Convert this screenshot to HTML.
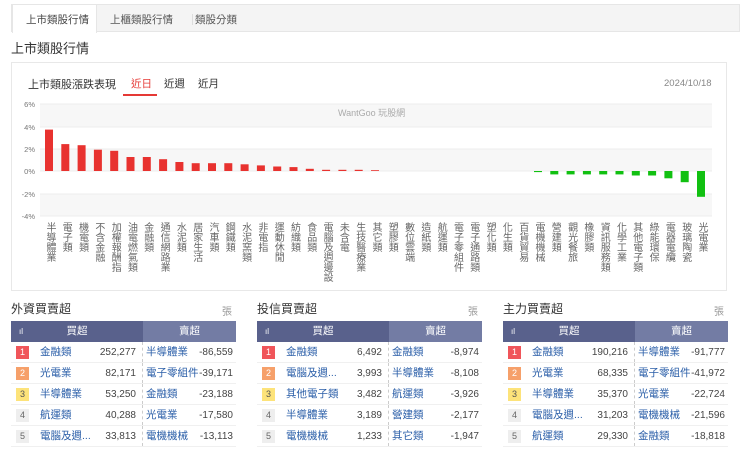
<!DOCTYPE html>
<html><head><meta charset="utf-8"><style>
*{margin:0;padding:0;box-sizing:border-box}
body{width:740px;height:451px;background:#fff;font-family:"Liberation Sans","Noto Sans CJK TC",sans-serif;color:#333;position:relative;overflow:hidden}
.abs{position:absolute}
.tabs{left:11px;top:4px;width:729px;height:28px;background:#f4f4f4;border:1px solid #e6e6e6;border-bottom:1px solid #e6e6e6}
.tab{position:absolute;top:7px;font-size:10.5px;color:#444}
.act{position:absolute;left:0;top:-1px;width:85px;height:29px;background:#fff;border:1px solid #e6e6e6;border-bottom:none}
.box{left:11px;top:62px;width:716px;height:229px;border:1px solid #e8e8e8}
.lbl{position:absolute;top:222px;width:12px;font-size:10px;line-height:11.3px;color:#666;writing-mode:vertical-rl;text-orientation:upright}
.panel{position:absolute;top:300px;width:225px}
.ptitle{font-size:12px;color:#333;height:21px;font-weight:normal}
.zh{position:absolute;right:4px;top:3px;font-size:10px;color:#999}
.hd{height:21px;display:flex;font-size:10.5px;color:#fff;line-height:21px}
.hd .l{width:132px;background:#59618c;position:relative;text-align:center}
.hd .r{flex:1;background:#737ca4;text-align:center}
.row{height:21px;display:flex;font-size:10.5px;line-height:21px;border-bottom:1px solid #f0f0f0}
.row .l{width:132px;position:relative;border-right:1px dashed #ccc}
.row .r{flex:1;position:relative}
.bd{position:absolute;left:5px;top:4px;width:13px;height:13px;font-size:9px;line-height:13px;text-align:center;color:#fff}
.nm{position:absolute;left:29px;color:#2a5ea8}
.nv{position:absolute;right:6px;color:#444;font-size:10px}
.r .nv{right:3px}
.rn{position:absolute;left:3px;color:#2a5ea8}
</style></head><body>
<div class="abs tabs">
<div class="act"></div>
<div class="tab" style="left:14px">上市類股行情</div>
<div class="tab" style="left:98px;color:#555">上櫃類股行情</div>
<div class="abs" style="left:180px;top:9px;width:1px;height:11px;background:#ddd"></div>
<div class="tab" style="left:183px;color:#555">類股分類</div>
</div>
<div class="abs" style="left:11px;top:38px;font-size:13px;color:#333">上市類股行情</div>
<div class="abs box"></div>
<div class="abs" style="left:28px;top:76px;font-size:11px;color:#333">上市類股漲跌表現</div>
<div class="abs" style="left:131px;top:76px;font-size:10.5px;color:#e53935">近日</div>
<div class="abs" style="left:123px;top:94px;width:34px;height:2px;background:#e53935"></div>
<div class="abs" style="left:164px;top:76px;font-size:10.5px;color:#333">近週</div>
<div class="abs" style="left:198px;top:76px;font-size:10.5px;color:#333">近月</div>
<div class="abs" style="left:664px;top:78px;font-size:9.5px;color:#888">2024/10/18</div>
<svg class="abs" style="left:0;top:0" width="740" height="230">
<rect x="40" y="104" width="672" height="23" fill="#f7f7f7"/>
<rect x="40" y="149" width="672" height="22" fill="#f7f7f7"/>
<rect x="40" y="194" width="672" height="22" fill="#f7f7f7"/>
<g stroke="#ececec" stroke-width="1">
<line x1="40" y1="104" x2="712" y2="104"/><line x1="40" y1="127" x2="712" y2="127"/><line x1="40" y1="149" x2="712" y2="149"/><line x1="40" y1="171" x2="712" y2="171"/><line x1="40" y1="194" x2="712" y2="194"/><line x1="40" y1="216" x2="712" y2="216"/>
</g>
<g font-size="7.5" fill="#777" font-family="Liberation Sans" text-anchor="end">
<text x="35" y="107">6%</text><text x="35" y="130">4%</text><text x="35" y="152">2%</text><text x="35" y="174">0%</text><text x="35" y="197">-2%</text><text x="35" y="219">-4%</text>
</g>
<text x="338" y="116" font-size="9" fill="#aaa">WantGoo 玩股網</text>
<g fill="#e8322f">
<rect x="45" y="129.6" width="8" height="41.4"/><rect x="61.3" y="144.1" width="8" height="26.9"/><rect x="77.6" y="145.2" width="8" height="25.8"/><rect x="93.9" y="149.7" width="8" height="21.3"/><rect x="110.2" y="150.8" width="8" height="20.2"/><rect x="126.5" y="157" width="8" height="14"/><rect x="142.8" y="157" width="8" height="14"/><rect x="159.1" y="159.2" width="8" height="11.8"/><rect x="175.4" y="162" width="8" height="9"/><rect x="191.7" y="163.2" width="8" height="7.8"/><rect x="208" y="163.2" width="8" height="7.8"/><rect x="224.3" y="163.2" width="8" height="7.8"/><rect x="240.6" y="164.3" width="8" height="6.7"/><rect x="256.9" y="165.4" width="8" height="5.6"/><rect x="273.2" y="166.5" width="8" height="4.5"/><rect x="289.5" y="167.1" width="8" height="3.9"/><rect x="305.8" y="168.8" width="8" height="2.2"/><rect x="322.1" y="169.8" width="8" height="1.2"/><rect x="338.4" y="169.8" width="8" height="1.2"/><rect x="354.7" y="169.8" width="8" height="1.2"/><rect x="371" y="170.2" width="8" height="0.8"/>
</g>
<g fill="#11c011">
<rect x="534" y="171" width="8" height="1.1"/><rect x="550.3" y="171" width="8" height="3.4"/><rect x="566.6" y="171" width="8" height="3.4"/><rect x="582.9" y="171" width="8" height="3.4"/><rect x="599.2" y="171" width="8" height="3.4"/><rect x="615.5" y="171" width="8" height="3.4"/><rect x="631.8" y="171" width="8" height="4.5"/><rect x="648.1" y="171" width="8" height="4.5"/><rect x="664.4" y="171" width="8" height="7.3"/><rect x="680.7" y="171" width="8" height="11.2"/><rect x="697" y="171" width="8" height="25.8"/>
</g>
</svg>
<div class="lbl" style="left:43px">半導體業</div>
<div class="lbl" style="left:59.3px">電子類</div>
<div class="lbl" style="left:75.6px">機電類</div>
<div class="lbl" style="left:91.9px">不含金融</div>
<div class="lbl" style="left:108.2px">加權報酬指</div>
<div class="lbl" style="left:124.5px">油電燃氣類</div>
<div class="lbl" style="left:140.8px">金融類</div>
<div class="lbl" style="left:157.1px">通信網路業</div>
<div class="lbl" style="left:173.4px">水泥類</div>
<div class="lbl" style="left:189.7px">居家生活</div>
<div class="lbl" style="left:206px">汽車類</div>
<div class="lbl" style="left:222.3px">鋼鐵類</div>
<div class="lbl" style="left:238.6px">水泥窯類</div>
<div class="lbl" style="left:254.9px">非電指</div>
<div class="lbl" style="left:271.2px">運動休閒</div>
<div class="lbl" style="left:287.5px">紡織類</div>
<div class="lbl" style="left:303.8px">食品類</div>
<div class="lbl" style="left:320.1px">電腦及週邊設</div>
<div class="lbl" style="left:336.4px">未含電</div>
<div class="lbl" style="left:352.7px">生技醫療業</div>
<div class="lbl" style="left:369px">其它類</div>
<div class="lbl" style="left:385.3px">塑膠類</div>
<div class="lbl" style="left:401.6px">數位雲端</div>
<div class="lbl" style="left:417.9px">造紙類</div>
<div class="lbl" style="left:434.2px">航運類</div>
<div class="lbl" style="left:450.5px">電子零組件</div>
<div class="lbl" style="left:466.8px">電子通路類</div>
<div class="lbl" style="left:483.1px">塑化類</div>
<div class="lbl" style="left:499.4px">化生類</div>
<div class="lbl" style="left:515.7px">百貨貿易</div>
<div class="lbl" style="left:532px">電機機械</div>
<div class="lbl" style="left:548.3px">營建類</div>
<div class="lbl" style="left:564.6px">觀光餐旅</div>
<div class="lbl" style="left:580.9px">橡膠類</div>
<div class="lbl" style="left:597.2px">資訊服務類</div>
<div class="lbl" style="left:613.5px">化學工業</div>
<div class="lbl" style="left:629.8px">其他電子類</div>
<div class="lbl" style="left:646.1px">綠能環保</div>
<div class="lbl" style="left:662.4px">電器電纜</div>
<div class="lbl" style="left:678.7px">玻璃陶瓷</div>
<div class="lbl" style="left:695px">光電業</div>

<div class="panel" style="left:11px">
<div class="ptitle">外資買賣超<span class="zh">張</span></div>
<div class="hd"><div class="l"><span style="position:absolute;left:8px;font-size:8px">ıl</span>買超</div><div class="r">賣超</div></div>
<div class="row"><div class="l"><span class="bd" style="background:#f0555a">1</span><span class="nm">金融類</span><span class="nv">252,277</span></div><div class="r"><span class="rn">半導體業</span><span class="nv">-86,559</span></div></div>
<div class="row"><div class="l"><span class="bd" style="background:#f6a06a">2</span><span class="nm">光電業</span><span class="nv">82,171</span></div><div class="r"><span class="rn">電子零組件</span><span class="nv">-39,171</span></div></div>
<div class="row"><div class="l"><span class="bd" style="background:#fde37a;color:#555">3</span><span class="nm">半導體業</span><span class="nv">53,250</span></div><div class="r"><span class="rn">金融類</span><span class="nv">-23,188</span></div></div>
<div class="row"><div class="l"><span class="bd" style="background:#eee;color:#666">4</span><span class="nm">航運類</span><span class="nv">40,288</span></div><div class="r"><span class="rn">光電業</span><span class="nv">-17,580</span></div></div>
<div class="row"><div class="l"><span class="bd" style="background:#eee;color:#666">5</span><span class="nm">電腦及週...</span><span class="nv">33,813</span></div><div class="r"><span class="rn">電機機械</span><span class="nv">-13,113</span></div></div>
</div>

<div class="panel" style="left:257px">
<div class="ptitle">投信買賣超<span class="zh">張</span></div>
<div class="hd"><div class="l"><span style="position:absolute;left:8px;font-size:8px">ıl</span>買超</div><div class="r">賣超</div></div>
<div class="row"><div class="l"><span class="bd" style="background:#f0555a">1</span><span class="nm">金融類</span><span class="nv">6,492</span></div><div class="r"><span class="rn">金融類</span><span class="nv">-8,974</span></div></div>
<div class="row"><div class="l"><span class="bd" style="background:#f6a06a">2</span><span class="nm">電腦及週...</span><span class="nv">3,993</span></div><div class="r"><span class="rn">半導體業</span><span class="nv">-8,108</span></div></div>
<div class="row"><div class="l"><span class="bd" style="background:#fde37a;color:#555">3</span><span class="nm">其他電子類</span><span class="nv">3,482</span></div><div class="r"><span class="rn">航運類</span><span class="nv">-3,926</span></div></div>
<div class="row"><div class="l"><span class="bd" style="background:#eee;color:#666">4</span><span class="nm">半導體業</span><span class="nv">3,189</span></div><div class="r"><span class="rn">營建類</span><span class="nv">-2,177</span></div></div>
<div class="row"><div class="l"><span class="bd" style="background:#eee;color:#666">5</span><span class="nm">電機機械</span><span class="nv">1,233</span></div><div class="r"><span class="rn">其它類</span><span class="nv">-1,947</span></div></div>
</div>

<div class="panel" style="left:503px">
<div class="ptitle">主力買賣超<span class="zh">張</span></div>
<div class="hd"><div class="l"><span style="position:absolute;left:8px;font-size:8px">ıl</span>買超</div><div class="r">賣超</div></div>
<div class="row"><div class="l"><span class="bd" style="background:#f0555a">1</span><span class="nm">金融類</span><span class="nv">190,216</span></div><div class="r"><span class="rn">半導體業</span><span class="nv">-91,777</span></div></div>
<div class="row"><div class="l"><span class="bd" style="background:#f6a06a">2</span><span class="nm">光電業</span><span class="nv">68,335</span></div><div class="r"><span class="rn">電子零組件</span><span class="nv">-41,972</span></div></div>
<div class="row"><div class="l"><span class="bd" style="background:#fde37a;color:#555">3</span><span class="nm">半導體業</span><span class="nv">35,370</span></div><div class="r"><span class="rn">光電業</span><span class="nv">-22,724</span></div></div>
<div class="row"><div class="l"><span class="bd" style="background:#eee;color:#666">4</span><span class="nm">電腦及週...</span><span class="nv">31,203</span></div><div class="r"><span class="rn">電機機械</span><span class="nv">-21,596</span></div></div>
<div class="row"><div class="l"><span class="bd" style="background:#eee;color:#666">5</span><span class="nm">航運類</span><span class="nv">29,330</span></div><div class="r"><span class="rn">金融類</span><span class="nv">-18,818</span></div></div>
</div>
</body></html>
